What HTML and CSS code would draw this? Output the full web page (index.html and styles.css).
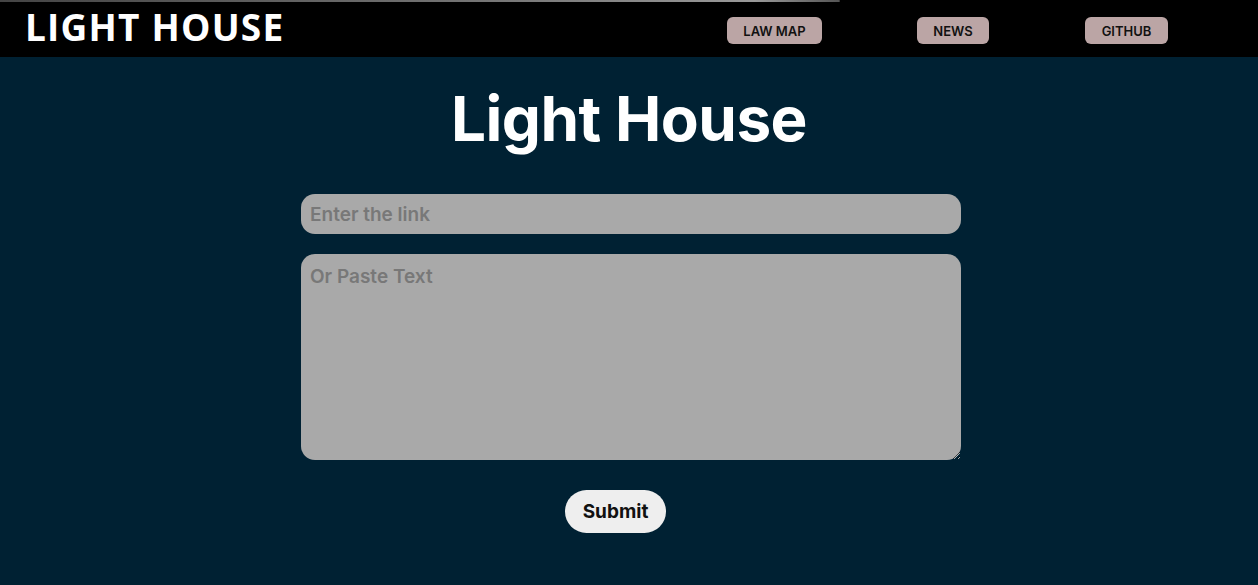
FILE: index.html
```html
<!DOCTYPE html>
<html lang="en">
<head>
<meta charset="utf-8">
<title>Light House</title>
<link rel="stylesheet" href="styles.css">
</head>
<body>
<header class="topbar">
  <div class="topline"></div>
  <div class="bar">
    <div class="logo">LIGHT HOUSE</div>
    <nav class="nav">
      <a class="nav-btn law" href="#">LAW MAP</a>
      <a class="nav-btn news" href="#">NEWS</a>
      <a class="nav-btn git" href="#">GITHUB</a>
    </nav>
  </div>
</header>
<main class="main">
  <h1 class="title">Light House</h1>
  <form class="form">
    <input class="field link" type="text" placeholder="Enter the link">
    <textarea class="field text" placeholder="Or Paste Text"></textarea>
    <button class="submit" type="button">Submit</button>
  </form>
</main>
</body>
</html>
```

FILE: styles.css
```css
* { box-sizing: border-box; }
html, body { margin: 0; padding: 0; }
body {
  background: #002133;
  font-family: Inter, "Noto Sans", sans-serif;
  height: 585px;
  overflow: hidden;
}
.topbar {
  background: #000;
  height: 57px;
}
.topline {
  height: 2px;
  background: linear-gradient(90deg, #444 0%, #777 40%, #999 60%, #555 66.7%, #000 66.8%);
}
.bar {
  display: flex;
  align-items: center;
  height: 55px;
  padding-left: 25px;
}
.logo {
  font-family: "Open Sans", sans-serif;
  font-weight: 700;
  font-size: 37px;
  color: #fff;
  letter-spacing: 1.2px;
  line-height: 1;
  margin-top: -6px;
}
.nav {
  display: flex;
  align-items: center;
  margin-left: auto;
  margin-right: 90px;
  margin-top: 2px;
}
.nav-btn {
  display: flex;
  align-items: center;
  justify-content: center;
  height: 27px;
  background: #bba5a5;
  border-radius: 6px;
  color: #111;
  font-family: Inter, sans-serif;
  font-weight: 600;
  font-size: 13px;
  text-decoration: none;
}
.law { width: 95px; }
.news { width: 72px; margin-left: 95px; }
.git { width: 83px; margin-left: 96px; }
.main {
  display: flex;
  flex-direction: column;
  align-items: center;
}
.title {
  margin: 24px 0 0;
  color: #fff;
  font-family: Inter, sans-serif;
  font-weight: 700;
  font-size: 62px;
  letter-spacing: -0.5px;
  line-height: 76px;
  height: 76px;
}
.form {
  display: flex;
  flex-direction: column;
  align-items: center;
  margin-top: 37px;
  padding-left: 4px;
}
.field {
  width: 660px;
  background: #a9a9a9;
  border: none;
  border-radius: 14px;
  font-family: Inter, sans-serif;
  font-weight: 600;
  font-size: 19px;
  color: #333;
  padding: 0 9px;
  outline: none;
}
.field::placeholder { color: #787878; }
.link { height: 40px; }
.text {
  height: 206px;
  margin-top: 20px;
  padding-top: 11px;
  resize: vertical;
}
.submit {
  margin-top: 30px;
  margin-left: -31px;
  width: 101px;
  height: 43px;
  border: none;
  border-radius: 22px;
  background: #eeeeee;
  color: #111;
  font-family: Inter, sans-serif;
  font-weight: 700;
  font-size: 19px;
}
```
